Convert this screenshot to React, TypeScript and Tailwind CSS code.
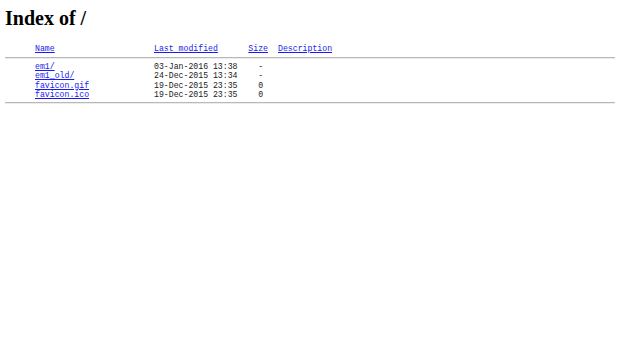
import React from 'react';

type Entry = {
  name: string;
  modified: string;
  size: string;
};

const entries: Entry[] = [
  { name: 'em1/', modified: '03-Jan-2016 13:38', size: '-' },
  { name: 'em1_old/', modified: '24-Dec-2015 13:34', size: '-' },
  { name: 'favicon.gif', modified: '19-Dec-2015 23:35', size: '0' },
  { name: 'favicon.ico', modified: '19-Dec-2015 23:35', size: '0' },
];

const classes = {
  row: 'grid grid-cols-[30px_119px_89px_25px_1fr] h-[9.2px] leading-[9.2px] whitespace-pre',
  link: 'text-[#1a1aee] underline',
  rule: 'h-[2px] border-t border-t-[#b8b8b8] border-b border-b-[#ececec]',
};

export default function App() {
  return (
    <div className="min-h-[343px] bg-white px-[5px] pt-[7px] text-black">
      <h1 className="text-[20px] leading-[23px] font-bold font-['Liberation_Serif',serif]">Index of /</h1>

      <div className="mt-[14px] font-['Liberation_Mono',monospace] text-[8.2px] text-[#222]">
        <div className={classes.row}>
          <span />
          <a className={classes.link} href="#">Name</a>
          <a className={classes.link} href="#">Last modified</a>
          <a className={`${classes.link} text-right`} href="#">Size</a>
          <a className={`${classes.link} ml-[10px] justify-self-start`} href="#">Description</a>
        </div>

        <div className={`mt-[3.5px] mb-[3.5px] ${classes.rule}`} />

        {entries.map((entry) => (
          <div key={entry.name} className={classes.row}>
            <span />
            <span>
              <a className={classes.link} href="#">{entry.name}</a>
            </span>
            <span>{entry.modified}</span>
            <span className="text-right">{entry.size + ' '}</span>
            <span />
          </div>
        ))}

        <div className={`mt-[3px] ${classes.rule}`} />
      </div>
    </div>
  );
}
